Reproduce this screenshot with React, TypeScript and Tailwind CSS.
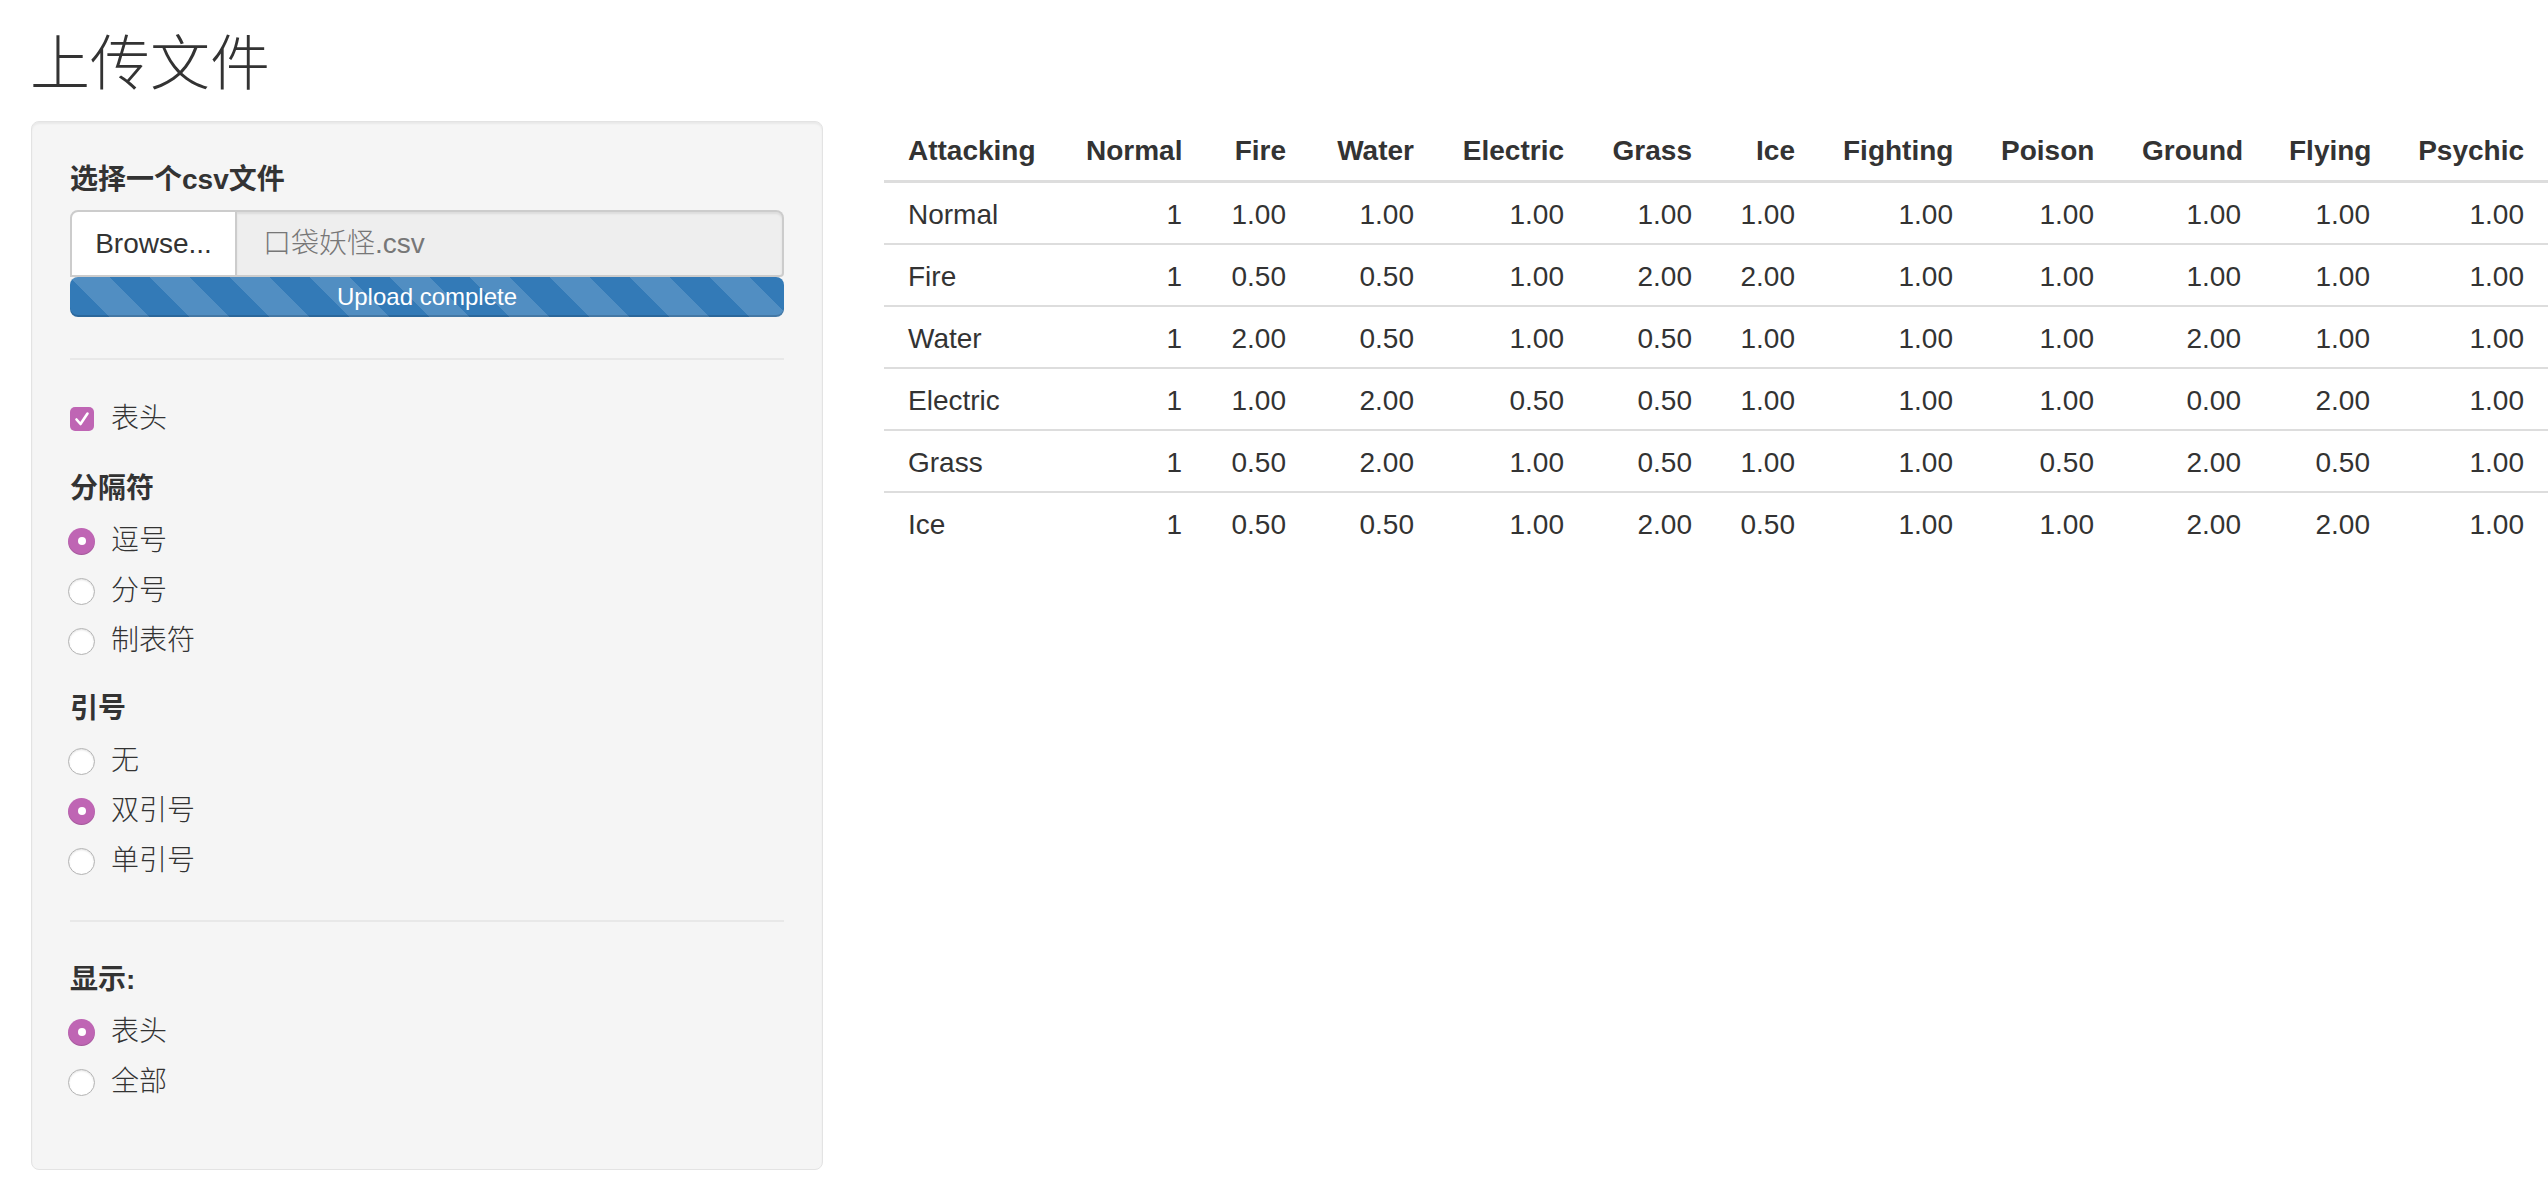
import React from 'react';

const headers = [
  'Attacking',
  'Normal',
  'Fire',
  'Water',
  'Electric',
  'Grass',
  'Ice',
  'Fighting',
  'Poison',
  'Ground',
  'Flying',
  'Psychic',
];

const colWidths = [
  'w-[178px]',
  'w-[144px]',
  'w-[104px]',
  'w-[128px]',
  'w-[150px]',
  'w-[128px]',
  'w-[103px]',
  'w-[158px]',
  'w-[141px]',
  'w-[147px]',
  'w-[129px]',
  'w-[154px]',
];

const rows: string[][] = [
  ['Normal', '1', '1.00', '1.00', '1.00', '1.00', '1.00', '1.00', '1.00', '1.00', '1.00', '1.00'],
  ['Fire', '1', '0.50', '0.50', '1.00', '2.00', '2.00', '1.00', '1.00', '1.00', '1.00', '1.00'],
  ['Water', '1', '2.00', '0.50', '1.00', '0.50', '1.00', '1.00', '1.00', '2.00', '1.00', '1.00'],
  ['Electric', '1', '1.00', '2.00', '0.50', '0.50', '1.00', '1.00', '1.00', '0.00', '2.00', '1.00'],
  ['Grass', '1', '0.50', '2.00', '1.00', '0.50', '1.00', '1.00', '0.50', '2.00', '0.50', '1.00'],
  ['Ice', '1', '0.50', '0.50', '1.00', '2.00', '0.50', '1.00', '1.00', '2.00', '2.00', '1.00'],
];

const Radio: React.FC<{ label: string; checked?: boolean }> = ({ label, checked }) => (
  <div className="h-[50px] flex items-center">
    {checked ? (
      <span className="-ml-[2px] w-[27px] h-[27px] rounded-full bg-[#bf65b4] flex items-center justify-center shadow-[inset_0_-1px_1px_rgba(0,0,0,0.15)]">
        <span className="w-[8px] h-[8px] rounded-full bg-white" />
      </span>
    ) : (
      <span className="-ml-[2px] w-[27px] h-[27px] rounded-full bg-white border border-[#b3b3b3] shadow-[inset_0_1px_2px_rgba(0,0,0,0.12)]" />
    )}
    <span className="ml-[16px] text-[28px] font-light">{label}</span>
  </div>
);

const SectionLabel: React.FC<{ children: React.ReactNode; className?: string }> = ({ children, className }) => (
  <div className={`h-[40px] flex items-center text-[28px] font-bold ${className ?? ''}`}>{children}</div>
);

export default function App() {
  return (
    <div className="w-[2548px] h-[1202px] overflow-hidden bg-white text-[#333] font-['Liberation_Sans','Noto_Sans_CJK_SC',sans-serif]">
      <h2 className="pl-[30px] pt-[32px] text-[60px] leading-[66px] font-light">上传文件</h2>

      <div className="flex items-start mt-[23px] pl-[31px]">
        {/* sidebar */}
        <div className="w-[792px] shrink-0 bg-[#f5f5f5] border border-[#e3e3e3] rounded-[8px] shadow-[inset_0_2px_2px_rgba(0,0,0,0.05)] px-[38px] pt-[38px] pb-[62px]">
          <SectionLabel>选择一个csv文件</SectionLabel>

          <div className="mt-[10px] flex h-[67px]">
            <div className="w-[167px] bg-white border-2 border-[#ccc] rounded-tl-[8px] flex items-center justify-center text-[28px]">
              Browse...
            </div>
            <div className="flex-1 bg-[#eee] border-2 border-l-0 border-[#ccc] rounded-tr-[8px] rounded-br-[4px] flex items-center pl-[26px] text-[28px] text-[#777] font-light shadow-[inset_0_2px_2px_rgba(0,0,0,0.075)]">
              口袋妖怪.csv
            </div>
          </div>
          <div className="h-[40px] rounded-[8px] bg-[#337ab7] bg-[linear-gradient(45deg,rgba(255,255,255,.15)_25%,transparent_25%,transparent_50%,rgba(255,255,255,.15)_50%,rgba(255,255,255,.15)_75%,transparent_75%,transparent)] bg-[length:80px_80px] shadow-[inset_0_-2px_0_rgba(0,0,0,0.15)] flex items-center justify-center text-white text-[24px]">
            Upload complete
          </div>

          <div className="mt-[41px] h-[2px] bg-[#e8e8e8]" />

          <div className="mt-[39px] h-[40px] flex items-center">
            <span className="w-[24px] h-[24px] rounded-[5px] bg-[#bf65b4] flex items-center justify-center">
              <svg width="20" height="20" viewBox="0 0 20 20" fill="none">
                <path d="M4.5 10.5 L8.5 15 L15.5 4.5" stroke="white" strokeWidth="2.6" strokeLinecap="round" strokeLinejoin="round" />
              </svg>
            </span>
            <span className="ml-[17px] text-[28px] font-light">表头</span>
          </div>

          <SectionLabel className="mt-[30px]">分隔符</SectionLabel>
          <div className="mt-[7px]">
            <Radio label="逗号" checked />
            <Radio label="分号" />
            <Radio label="制表符" />
          </div>

          <SectionLabel className="mt-[23px]">引号</SectionLabel>
          <div className="mt-[7px]">
            <Radio label="无" />
            <Radio label="双引号" checked />
            <Radio label="单引号" />
          </div>

          <div className="mt-[34px] h-[2px] bg-[#e8e8e8]" />

          <SectionLabel className="mt-[38px]">显示:</SectionLabel>
          <div className="mt-[7px]">
            <Radio label="表头" checked />
            <Radio label="全部" />
          </div>
        </div>

        {/* main */}
        <table className="ml-[61px] shrink-0 table-fixed border-separate border-spacing-0 w-[1664px] text-[28px] leading-[40px]">
          <colgroup>
            {colWidths.map((w, i) => (
              <col key={i} className={w} />
            ))}
          </colgroup>
          <thead>
            <tr>
              {headers.map((h, i) => (
                <th
                  key={h}
                  className={`px-[24px] pt-[10px] pb-[9px] border-b-[3px] border-[#ddd] font-bold ${i === 0 ? 'text-left' : 'text-right'}`}
                >
                  {h}
                </th>
              ))}
            </tr>
          </thead>
          <tbody>
            {rows.map((row, r) => (
              <tr key={row[0]}>
                {row.map((cell, i) => (
                  <td
                    key={i}
                    className={`px-[24px] pt-[12px] pb-[8px] ${r < rows.length - 1 ? 'border-b-2 border-[#ddd]' : ''} ${i === 0 ? 'text-left' : 'text-right'}`}
                  >
                    {cell}
                  </td>
                ))}
              </tr>
            ))}
          </tbody>
        </table>
      </div>
    </div>
  );
}
